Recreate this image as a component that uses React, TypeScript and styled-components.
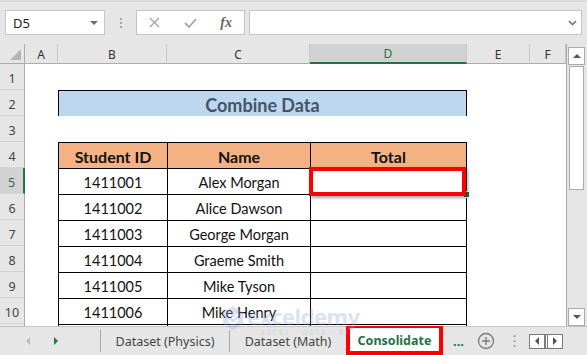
import React from 'react';
import styled, { createGlobalStyle } from 'styled-components';

const GlobalStyle = createGlobalStyle`
  html, body { margin: 0; padding: 0; }
  body {
    width: 587px;
    height: 355px;
    overflow: hidden;
    background: #e6e6e6;
    font-family: "Noto Sans", "Open Sans", sans-serif;
  }
`;

const Window = styled.div`
  position: relative;
  width: 587px;
  height: 355px;
  display: flex;
  flex-direction: column;
  background: #e6e6e6;
  overflow: hidden;
`;

/* ---------- formula bar ---------- */

const FormulaRow = styled.div`
  height: 45px;
  box-sizing: border-box;
  padding: 8px 5px 0 5px;
  display: flex;
  align-items: flex-start;
  border-top: 2px solid #d9d9d9;
`;

const NameBox = styled.div`
  width: 100px;
  height: 25px;
  box-sizing: border-box;
  background: #fff;
  border: 1px solid #c6c6c6;
  display: flex;
  align-items: center;
  justify-content: space-between;
  padding: 0 6px 0 7px;
  font-size: 13px;
  color: #222;
`;

const Caret = styled.span`
  width: 0;
  height: 0;
  border-left: 4px solid transparent;
  border-right: 4px solid transparent;
  border-top: 4px solid #6d6d6d;
`;

const GripDots = styled.div`
  width: 31px;
  height: 25px;
  display: flex;
  flex-direction: column;
  align-items: center;
  justify-content: center;
  gap: 2px;

  & span {
    width: 2px;
    height: 2px;
    background: #a6a6a6;
  }
`;

const FxBox = styled.div`
  width: 109px;
  height: 25px;
  box-sizing: border-box;
  background: #fff;
  border: 1px solid #c6c6c6;
  display: flex;
`;

const FxSlot = styled.div`
  width: 36px;
  display: flex;
  align-items: center;
  justify-content: center;
  color: #666;
  font-family: "Liberation Serif", serif;
  font-style: italic;
  font-weight: bold;
  font-size: 14px;
`;

const FormulaInput = styled.div`
  margin-left: 4px;
  width: 333px;
  height: 25px;
  box-sizing: border-box;
  background: #fff;
  border: 1px solid #c6c6c6;
  display: flex;
  align-items: center;
  justify-content: flex-end;
  padding-right: 4px;
`;

/* ---------- sheet ---------- */

const Main = styled.div`
  height: 282px;
  display: flex;
`;

const Sheet = styled.div`
  width: 567px;
  height: 282px;
  overflow: hidden;
  background: #fff;
  border-right: 1px solid #ababab;
  box-sizing: border-box;
`;

const Grid = styled.div`
  display: grid;
  grid-template-columns: 25px 33px 109px 143px 157px 63px 36px;
  grid-template-rows: 20px repeat(11, 26px);
`;

const Corner = styled.div`
  position: relative;
  background: #e6e6e6;
  border-right: 1px solid #ababab;
  border-bottom: 1px solid #ababab;

  &::after {
    content: '';
    position: absolute;
    right: 3px;
    bottom: 3px;
    border-left: 11px solid transparent;
    border-bottom: 11px solid #b4b4b4;
  }
`;

const ColHeader = styled.div<{ $active?: boolean }>`
  background: ${p => (p.$active ? '#d2d2d2' : '#e6e6e6')};
  border-right: 1px solid #c6c6c6;
  border-bottom: ${p => (p.$active ? '2px solid #217346' : '1px solid #ababab')};
  display: flex;
  align-items: center;
  justify-content: center;
  padding-top: 1px;
  font-size: 12px;
  color: ${p => (p.$active ? '#217346' : '#333')};
`;

const RowHeader = styled.div<{ $active?: boolean }>`
  background: ${p => (p.$active ? '#d2d2d2' : '#e6e6e6')};
  border-right: ${p => (p.$active ? '2px solid #217346' : '1px solid #ababab')};
  border-bottom: 1px solid #d4d4d4;
  display: flex;
  align-items: flex-end;
  justify-content: center;
  padding-bottom: 2px;
  box-sizing: border-box;
  font-size: 12.5px;
  color: ${p => (p.$active ? '#217346' : '#444')};
`;

const Blank = styled.div``;

const Cell = styled.div<{ $kind: 'title' | 'head' | 'data'; $span?: number; $right?: boolean }>`
  position: relative;
  grid-column: span ${p => p.$span ?? 1};
  border-top: 1px solid #000;
  border-left: 1px solid #000;
  border-right: ${p => (p.$right ? '1px solid #000' : 'none')};
  background: ${p => (p.$kind === 'title' ? '#bdd7ee' : p.$kind === 'head' ? '#f4b183' : '#fff')};
  color: ${p => (p.$kind === 'title' ? '#44546a' : '#111')};
  font-family: Lato, "Open Sans", sans-serif;
  font-weight: ${p => (p.$kind === 'data' ? 400 : 700)};
  font-size: ${p => (p.$kind === 'title' ? '18px' : p.$kind === 'head' ? '16px' : '14.5px')};
  display: flex;
  align-items: center;
  justify-content: center;
  padding-top: 2px;
  box-sizing: border-box;
  white-space: nowrap;
`;

const RedFrame = styled.div`
  position: absolute;
  top: -2px;
  left: -2px;
  right: 0;
  bottom: -2px;
  border: 4px solid #ff0000;
  box-shadow: 2px 2px 3px rgba(0, 0, 0, 0.35);
  z-index: 2;
`;

const FillHandle = styled.div`
  position: absolute;
  right: -4px;
  bottom: -4px;
  width: 5px;
  height: 5px;
  background: #217346;
  border: 1px solid #fff;
  z-index: 1;
`;

/* ---------- vertical scrollbar ---------- */

const VScroll = styled.div`
  width: 20px;
  display: flex;
  flex-direction: column;
  padding: 3px 2px 0 1px;
  box-sizing: border-box;
  background: #e6e6e6;
`;

const ScrollBtn = styled.div`
  height: 16px;
  background: #fff;
  border: 1px solid #ababab;
  display: flex;
  align-items: center;
  justify-content: center;
`;

const Thumb = styled.div`
  margin: 1px 1px 0 1px;
  height: 122px;
  background: #fff;
  border: 1px solid #ababab;
`;

const Trough = styled.div`
  flex: 1;
`;

const Tri = styled.span<{ $dir: 'up' | 'down' | 'left' | 'right'; $color?: string; $size?: number }>`
  width: 0;
  height: 0;
  ${p => {
    const s = p.$size ?? 4;
    const c = p.$color ?? '#555';
    if (p.$dir === 'up') return `border-left:${s}px solid transparent;border-right:${s}px solid transparent;border-bottom:${s}px solid ${c};`;
    if (p.$dir === 'down') return `border-left:${s}px solid transparent;border-right:${s}px solid transparent;border-top:${s}px solid ${c};`;
    if (p.$dir === 'left') return `border-top:${s}px solid transparent;border-bottom:${s}px solid transparent;border-right:${s}px solid ${c};`;
    return `border-top:${s}px solid transparent;border-bottom:${s}px solid transparent;border-left:${s}px solid ${c};`;
  }}
`;

/* ---------- sheet tabs ---------- */

const TabBar = styled.div`
  height: 28px;
  display: flex;
  align-items: stretch;
  border-top: 1px solid #c6c6c6;
  background: #e6e6e6;
`;

const NavArea = styled.div`
  width: 100px;
  display: flex;
  align-items: center;
  padding-left: 26px;
  gap: 24px;
  box-sizing: border-box;
`;

const Sep = styled.div`
  width: 1px;
  margin: 3px 0;
  background: #a6a6a6;
`;

const Tab = styled.div<{ $width: number }>`
  width: ${p => p.$width}px;
  display: flex;
  align-items: center;
  justify-content: center;
  font-size: 12.5px;
  color: #444;
`;

const ActiveTab = styled.div`
  width: 97px;
  margin-top: -3px;
  box-sizing: border-box;
  border: 4px solid #ff0000;
  background: #fff;
  display: flex;
  align-items: center;
  justify-content: center;
  padding-top: 2px;
  font-size: 12.5px;
  font-weight: 700;
  color: #217346;
`;

const More = styled.div`
  margin-left: 10px;
  width: 16px;
  display: flex;
  align-items: center;
  font-weight: 700;
  font-size: 13px;
  color: #217346;
`;

const IconSlot = styled.div<{ $width: number }>`
  width: ${p => p.$width}px;
  display: flex;
  align-items: center;
  justify-content: center;
`;

const HScrollBtns = styled.div`
  display: flex;
  align-items: center;
  margin-left: 4px;

  & > div {
    width: 16px;
    height: 15px;
    box-sizing: border-box;
    border: 1px solid #7a7a7a;
    background: #fff;
    display: flex;
    align-items: center;
    justify-content: center;
  }
  & > div + div {
    border-left: 3px double #7a7a7a;
    width: 18px;
  }
`;

/* ---------- watermark ---------- */

const Watermark = styled.div`
  position: absolute;
  left: 222px;
  top: 305px;
  display: flex;
  align-items: flex-start;
  gap: 3px;
  opacity: 0.3;
  pointer-events: none;
  z-index: 5;
`;

const WmText = styled.div`
  display: flex;
  flex-direction: column;
  line-height: 1;
  color: #8aa0d8;

  & b {
    font-family: "Noto Sans", sans-serif;
    font-size: 22px;
    font-weight: 700;
    letter-spacing: -0.5px;
  }
  & small {
    font-size: 7px;
    letter-spacing: 2px;
    margin-top: 2px;
    padding-left: 14px;
  }
`;

const columns = ['A', 'B', 'C', 'D', 'E', 'F'];

const students = [
  ['1411001', 'Alex Morgan'],
  ['1411002', 'Alice Dawson'],
  ['1411003', 'George Morgan'],
  ['1411004', 'Graeme Smith'],
  ['1411005', 'Mike Tyson'],
  ['1411006', 'Mike Henry'],
  ['1411007', ''],
];

const renderRow = (rowNum: number) => {
  const cells: React.ReactNode[] = [];
  cells.push(<RowHeader key={`h${rowNum}`} $active={rowNum === 5}>{rowNum}</RowHeader>);
  cells.push(<Blank key={`a${rowNum}`} />);

  if (rowNum === 2) {
    cells.push(<Cell key="t" $kind="title" $span={3} $right>Combine Data</Cell>);
  } else if (rowNum === 4) {
    cells.push(<Cell key="b4" $kind="head">Student ID</Cell>);
    cells.push(<Cell key="c4" $kind="head">Name</Cell>);
    cells.push(<Cell key="d4" $kind="head" $right>Total</Cell>);
  } else if (rowNum >= 5) {
    const [id, name] = students[rowNum - 5];
    cells.push(<Cell key={`b${rowNum}`} $kind="data">{id}</Cell>);
    cells.push(<Cell key={`c${rowNum}`} $kind="data">{name}</Cell>);
    cells.push(
      <Cell key={`d${rowNum}`} $kind="data" $right>
        {rowNum === 5 && (
          <>
            <FillHandle />
            <RedFrame />
          </>
        )}
      </Cell>
    );
  } else {
    cells.push(<Blank key={`b${rowNum}`} />, <Blank key={`c${rowNum}`} />, <Blank key={`d${rowNum}`} />);
  }
  cells.push(<Blank key={`e${rowNum}`} />, <Blank key={`f${rowNum}`} />);
  return cells;
};

export default function App() {
  return (
    <Window>
      <GlobalStyle />
      <FormulaRow>
        <NameBox>
          D5
          <Caret />
        </NameBox>
        <GripDots>
          <span />
          <span />
          <span />
        </GripDots>
        <FxBox>
          <FxSlot>
            <svg width="11" height="11" viewBox="0 0 11 11">
              <path d="M1 1 L10 10 M10 1 L1 10" stroke="#a6a6a6" strokeWidth="1.4" fill="none" />
            </svg>
          </FxSlot>
          <FxSlot>
            <svg width="13" height="10" viewBox="0 0 13 10">
              <path d="M1 5 L5 9 L12 1" stroke="#a6a6a6" strokeWidth="1.8" fill="none" />
            </svg>
          </FxSlot>
          <FxSlot>fx</FxSlot>
        </FxBox>
        <FormulaInput>
          <svg width="9" height="6" viewBox="0 0 9 6">
            <path d="M1 1 L4.5 4.5 L8 1" stroke="#777" strokeWidth="1.6" fill="none" />
          </svg>
        </FormulaInput>
      </FormulaRow>

      <Main>
        <Sheet>
          <Grid>
            <Corner />
            {columns.map(c => (
              <ColHeader key={c} $active={c === 'D'}>{c}</ColHeader>
            ))}
            {Array.from({ length: 11 }, (_, i) => renderRow(i + 1))}
          </Grid>
        </Sheet>
        <VScroll>
          <ScrollBtn>
            <Tri $dir="up" $size={4} />
          </ScrollBtn>
          <Thumb />
          <Trough />
          <ScrollBtn>
            <Tri $dir="down" $size={4} />
          </ScrollBtn>
        </VScroll>
      </Main>

      <TabBar>
        <NavArea>
          <Tri $dir="left" $color="#bcbcbc" $size={4} />
          <Tri $dir="right" $color="#217346" $size={4} />
        </NavArea>
        <Sep />
        <Tab $width={128}>Dataset (Physics)</Tab>
        <Sep />
        <Tab $width={116}>Dataset (Math)</Tab>
        <ActiveTab>Consolidate</ActiveTab>
        <More>...</More>
        <IconSlot $width={34}>
          <svg width="18" height="18" viewBox="0 0 18 18">
            <circle cx="9" cy="9" r="7.5" stroke="#7a7a7a" strokeWidth="1.3" fill="none" />
            <path d="M9 5 V13 M5 9 H13" stroke="#7a7a7a" strokeWidth="1.4" />
          </svg>
        </IconSlot>
        <IconSlot $width={22}>
          <svg width="3" height="12" viewBox="0 0 3 12">
            <rect x="0.5" y="0" width="2" height="2" fill="#a6a6a6" />
            <rect x="0.5" y="5" width="2" height="2" fill="#a6a6a6" />
            <rect x="0.5" y="10" width="2" height="2" fill="#a6a6a6" />
          </svg>
        </IconSlot>
        <HScrollBtns>
          <div>
            <Tri $dir="left" $size={4} />
          </div>
          <div>
            <Tri $dir="right" $size={4} />
          </div>
        </HScrollBtns>
      </TabBar>

      <Watermark>
        <svg width="22" height="26" viewBox="0 0 22 26">
          <path d="M11 1 L21 7 L21 19 L11 25 L1 19 L1 7 Z" fill="#8aa0d8" />
          <path d="M6 9 L11 13 L16 9 M6 15 L11 19 L16 15" stroke="#fff" strokeWidth="2" fill="none" />
        </svg>
        <WmText>
          <b>exceldemy</b>
          <small>EXCEL · DATA · BI</small>
        </WmText>
      </Watermark>
    </Window>
  );
}
